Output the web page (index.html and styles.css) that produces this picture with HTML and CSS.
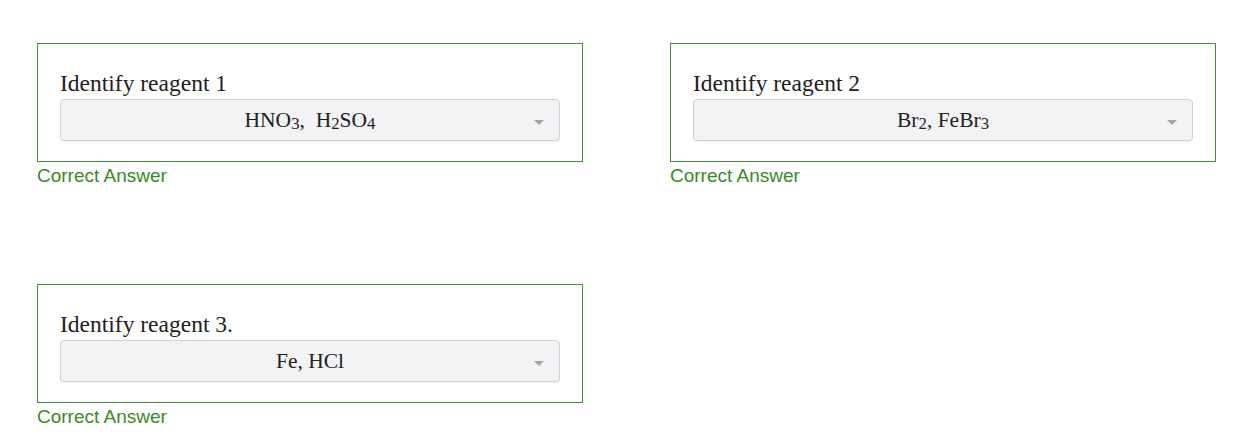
FILE: index.html
```html
<!DOCTYPE html>
<html>
<head>
    <link rel="stylesheet" href="styles.css">
</head>
<body>
    <section class="quiz-grid">
        <!-- Question 1 -->
        <div class="question">
            <div class="question-box">
                <div class="question-label">Identify reagent 1</div>
                <div class="answer-select">
                    <span class="answer-text">HNO<sub>3</sub>, &nbsp;H<sub>2</sub>SO<sub>4</sub></span>
                    <span class="select-arrow"></span>
                </div>
            </div>
            <div class="feedback">Correct Answer</div>
        </div>

        <!-- Question 2 -->
        <div class="question">
            <div class="question-box">
                <div class="question-label">Identify reagent 2</div>
                <div class="answer-select">
                    <span class="answer-text">Br<sub>2</sub>, FeBr<sub>3</sub></span>
                    <span class="select-arrow"></span>
                </div>
            </div>
            <div class="feedback">Correct Answer</div>
        </div>

        <!-- Question 3 -->
        <div class="question">
            <div class="question-box">
                <div class="question-label">Identify reagent 3.</div>
                <div class="answer-select">
                    <span class="answer-text">Fe, HCl</span>
                    <span class="select-arrow"></span>
                </div>
            </div>
            <div class="feedback">Correct Answer</div>
        </div>
    </section>
</body>
</html>
```

FILE: styles.css
```css
body {
    margin: 0;
    background: white;
    font-family: "Liberation Serif", "Times New Roman", serif;
    color: #222;
}

.quiz-grid {
    display: grid;
    grid-template-columns: 546px 546px;
    column-gap: 87px;
    row-gap: 98px;
    padding: 43px 0 0 37px;
}

.question-box {
    border: 1px solid #44903a;
    padding: 25px 22px 21px 22px;
    height: 119px;
    box-sizing: border-box;
}

.question-label {
    font-size: 23.5px;
    line-height: 28px;
    margin-bottom: 2px;
    color: #1e1e1e;
}

.answer-select {
    position: relative;
    height: 42px;
    box-sizing: border-box;
    border: 1px solid #cfd1d4;
    border-radius: 4px;
    background: #f2f3f5;
    box-shadow: 0 1px 1px rgba(0,0,0,0.06);
    display: flex;
    align-items: center;
    justify-content: center;
}

.answer-text {
    font-size: 21.5px;
    color: #222;
}

.answer-text sub {
    font-size: 0.78em;
    vertical-align: -0.1em;
    line-height: 0;
}

.select-arrow {
    position: absolute;
    right: 15px;
    top: 20px;
    width: 0;
    height: 0;
    border-left: 5px solid transparent;
    border-right: 5px solid transparent;
    border-top: 5px solid #a3a5a8;
}

.feedback {
    margin-top: 4px;
    font-family: "Liberation Sans", Arial, sans-serif;
    font-size: 19px;
    line-height: 20px;
    color: #3a8a28;
}
```
